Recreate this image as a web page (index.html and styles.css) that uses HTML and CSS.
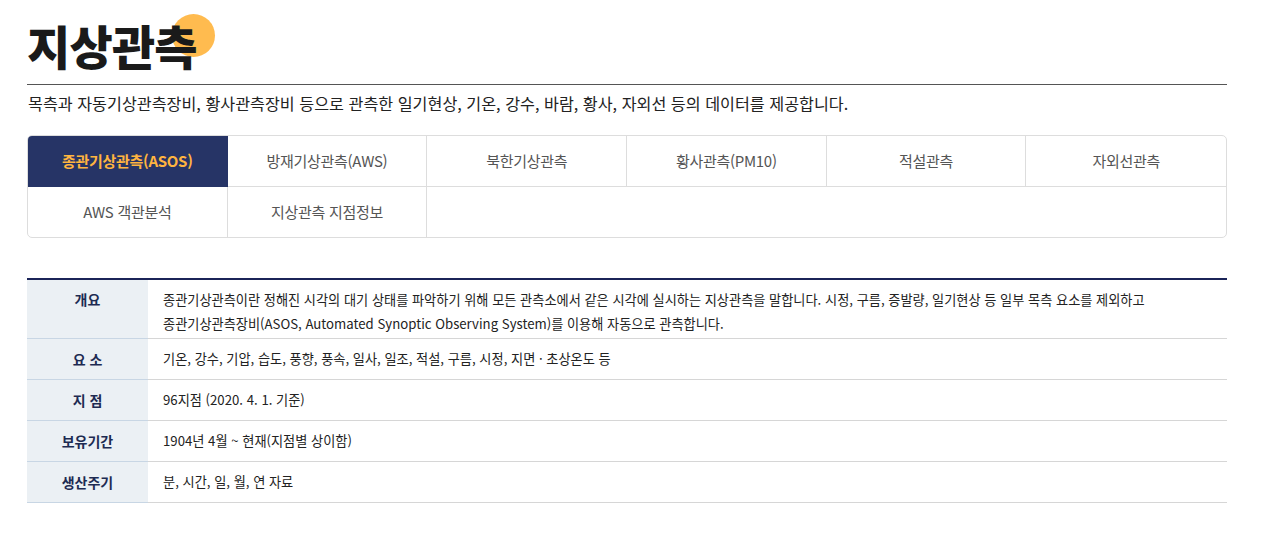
FILE: index.html
```html
<!DOCTYPE html>
<html lang="ko">
<head>
<meta charset="utf-8">
<link rel="stylesheet" href="styles.css">
</head>
<body>
<div class="page">
  <div class="title-wrap">
    <h1 class="title"><span class="dot"></span><span class="title-text">지상관측</span></h1>
  </div>
  <p class="desc">목측과 자동기상관측장비, 황사관측장비 등으로 관측한 일기현상, 기온, 강수, 바람, 황사, 자외선 등의 데이터를 제공합니다.</p>
  <div class="tabs">
    <div class="tab active">종관기상관측(ASOS)</div>
    <div class="tab">방재기상관측(AWS)</div>
    <div class="tab">북한기상관측</div>
    <div class="tab">황사관측(PM10)</div>
    <div class="tab">적설관측</div>
    <div class="tab last">자외선관측</div>
    <div class="tab bottom">AWS 객관분석</div>
    <div class="tab bottom">지상관측 지점정보</div>
    <div class="tab bottom fill"></div>
  </div>
  <table class="info">
    <tr class="first">
      <th>개요</th>
      <td>종관기상관측이란 정해진 시각의 대기 상태를 파악하기 위해 모든 관측소에서 같은 시각에 실시하는 지상관측을 말합니다. 시정, 구름, 증발량, 일기현상 등 일부 목측 요소를 제외하고<br>종관기상관측장비(ASOS, Automated Synoptic Observing System)를 이용해 자동으로 관측합니다.</td>
    </tr>
    <tr><th>요 소</th><td>기온, 강수, 기압, 습도, 풍향, 풍속, 일사, 일조, 적설, 구름, 시정, 지면 · 초상온도 등</td></tr>
    <tr><th>지 점</th><td>96지점 (2020. 4. 1. 기준)</td></tr>
    <tr><th>보유기간</th><td>1904년 4월 ~ 현재(지점별 상이함)</td></tr>
    <tr><th>생산주기</th><td>분, 시간, 일, 월, 연 자료</td></tr>
  </table>
</div>
</body>
</html>
```
FILE: styles.css
```css
* { box-sizing: border-box; }
html, body { margin: 0; padding: 0; background: #fff; }
body {
  font-family: "Noto Sans CJK KR", "Noto Sans", sans-serif;
  color: #222;
}
.page {
  width: 1200px;
  margin-left: 27px;
  padding-top: 14px;
}
.title-wrap {
  border-bottom: 1px solid #555;
  height: 71px;
}
.title {
  position: relative;
  display: inline-block;
  margin: 0;
  font-size: 47px;
  font-weight: 900;
  line-height: 62px;
  letter-spacing: -0.8px;
  color: #1a1a1a;
}
.title-text { position: relative; }
.dot {
  position: absolute;
  left: 145px;
  top: 0;
  width: 43px;
  height: 43px;
  border-radius: 50%;
  background: #ffbb4f;
}
.desc {
  margin: 6px 0 0 1px;
  font-size: 16.2px;
  line-height: 24px;
  letter-spacing: 0;
  color: #222;
}
.tabs {
  margin-top: 20px;
  display: grid;
  grid-template-columns: repeat(6, 1fr);
  border: 1px solid #ddd;
  border-radius: 5px;
  overflow: hidden;
}
.tab {
  height: 51px;
  padding-bottom: 2px;
  display: flex;
  align-items: center;
  justify-content: center;
  font-size: 15px;
  color: #555;
  letter-spacing: -0.3px;
  border-right: 1px solid #ddd;
  border-bottom: 1px solid #ddd;
}
.tab.last { border-right: none; }
.tab.bottom { border-bottom: none; height: 50px; }
.tab.fill { grid-column: span 4; border-right: none; }
.tab.active {
  background: #263466;
  color: #ffb440;
  font-weight: 700;
  border-color: #263466;
}
.info {
  margin-top: 40px;
  width: 100%;
  border-collapse: collapse;
  border-top: 2px solid #1b2458;
}
.info th {
  width: 121px;
  background: #ebf0f4;
  color: #1d2b52;
  font-size: 14px;
  font-weight: 700;
  vertical-align: top;
  padding: 9px 0 9px;
  line-height: 22px;
  border-bottom: 1px solid #c8d6e4;
}
.info td {
  padding: 9px 15px 9px 15px;
  font-size: 13.2px;
  line-height: 22px;
  color: #222;
  letter-spacing: 0;
  border-bottom: 1px solid #d6d6d6;
}
.info tr.first th { padding-top: 8px; }
.info tr.first td { padding-top: 8px; padding-bottom: 2px; line-height: 24px; }
```
